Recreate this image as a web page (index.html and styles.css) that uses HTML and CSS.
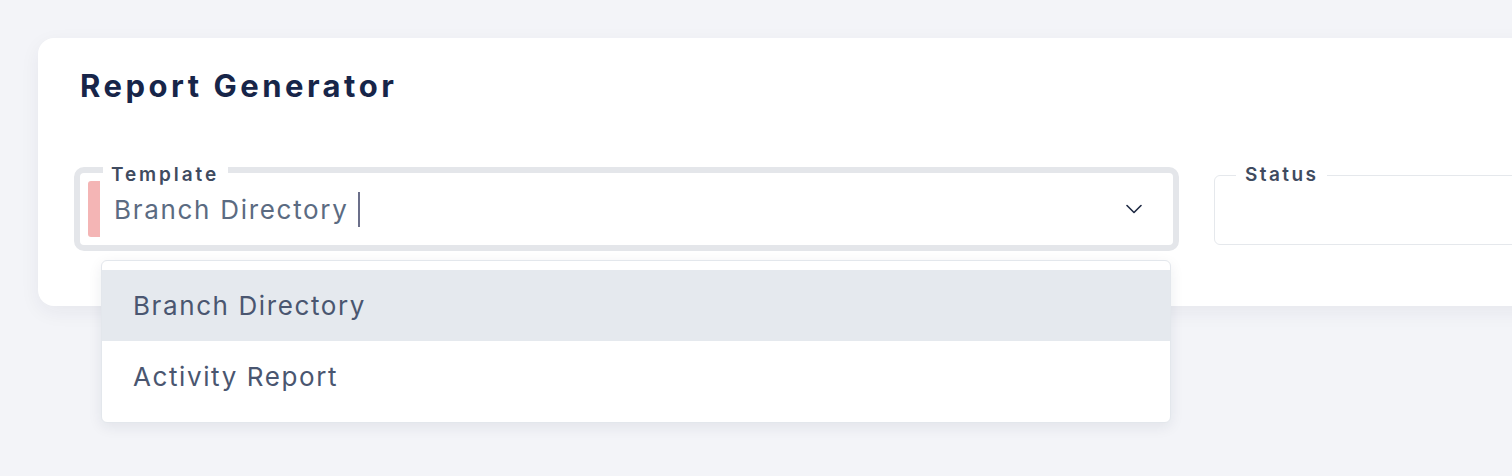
FILE: index.html
```html
<!DOCTYPE html>
<html lang="en">

<head>
    <meta charset="UTF-8">
    <title>Report Generator</title>
    <link rel="stylesheet" href="styles.css">
</head>

<body>
    <div class="page">
        <!-- Report card -->
        <div class="card">
            <h1 class="card-title">Report Generator</h1>

            <div class="fields">
                <!-- Template select (open) -->
                <div class="select-wrap">
                    <fieldset class="field field-focused">
                        <legend>Template</legend>
                        <div class="field-body">
                            <span class="marker"></span>
                            <span class="value">Branch Directory</span>
                            <span class="caret"></span>
                            <svg class="chevron" width="16" height="10" viewBox="0 0 16 10">
                                <path d="M1 1.5 L8 8.5 L15 1.5" fill="none" stroke="#1f2a44" stroke-width="1.6" stroke-linecap="round" stroke-linejoin="round"/>
                            </svg>
                        </div>
                    </fieldset>

                    <ul class="options">
                        <li class="option active">Branch Directory</li>
                        <li class="option">Activity Report</li>
                    </ul>
                </div>

                <!-- Status select -->
                <fieldset class="field field-status">
                    <legend>Status</legend>
                    <div class="field-body"></div>
                </fieldset>
            </div>
        </div>
    </div>
</body>

</html>
```

FILE: styles.css
```css
/* Basic styling */
body {
    margin: 0;
    padding: 0;
    background-color: #f3f4f8;
    font-family: Inter, "Open Sans", sans-serif;
    color: #172549;
}

.page {
    height: 100vh;
    box-sizing: border-box;
    padding: 38px 0 0 38px;
    overflow: hidden;
}

.card {
    width: 1600px;
    height: 268px;
    box-sizing: border-box;
    padding: 28px 42px;
    background: #fff;
    border-radius: 16px;
    box-shadow: 0 6px 20px rgba(30, 40, 70, 0.06);
}

.card-title {
    margin: 0 0 59px 0;
    font-size: 31px;
    font-weight: 700;
    line-height: 40px;
    letter-spacing: 3.5px;
    color: #172549;
}

/* Fields row */
.fields {
    display: grid;
    grid-template-columns: 1093px 1093px;
    gap: 41px;
}

.select-wrap {
    position: relative;
}

.field {
    margin: 0;
    padding: 0;
    border: 1px solid #e5e8ec;
    border-radius: 6px;
    min-width: 0;
}

.field-status {
    align-self: start;
}

.field legend {
    margin-left: 21px;
    padding: 0 9px;
    font-size: 19px;
    font-weight: 600;
    line-height: 20px;
    letter-spacing: 2.4px;
    color: #3f4b60;
}

.field .field-body {
    height: 59px;
}

.field-focused {
    margin: -10px -6px 0 -6px;
    border: 6px solid #e4e6ea;
    border-radius: 10px;
}

.field-focused legend {
    margin-left: 23px;
    padding: 10px 9px 0 8px;
    letter-spacing: 2.9px;
}

.field-focused .field-body {
    height: 72px;
    margin-top: -12px;
    display: flex;
    align-items: center;
}

.marker {
    width: 12px;
    height: 56px;
    margin-left: 8px;
    background: #f4b5b5;
    border-radius: 3px 0 0 3px;
}

.value {
    margin-left: 14px;
    font-size: 26px;
    letter-spacing: 1.7px;
    color: #5b6b82;
}

.caret {
    width: 2px;
    height: 35px;
    margin-left: 9px;
    background: #6b6f8a;
}

.chevron {
    margin-left: auto;
    margin-right: 31px;
}

/* Open dropdown list */
.options {
    position: absolute;
    top: 95px;
    left: 21px;
    width: 1070px;
    box-sizing: border-box;
    margin: 0;
    padding: 9px 0 10px 0;
    list-style: none;
    background: #fff;
    border: 1px solid #e3e7ec;
    border-radius: 6px;
    box-shadow: 0 4px 14px rgba(30, 40, 70, 0.08);
}

.option {
    height: 71px;
    display: flex;
    align-items: center;
    padding-left: 31px;
    font-size: 26px;
    letter-spacing: 1.6px;
    color: #4a5670;
}

.option.active {
    background: #e5e9ee;
}
```
